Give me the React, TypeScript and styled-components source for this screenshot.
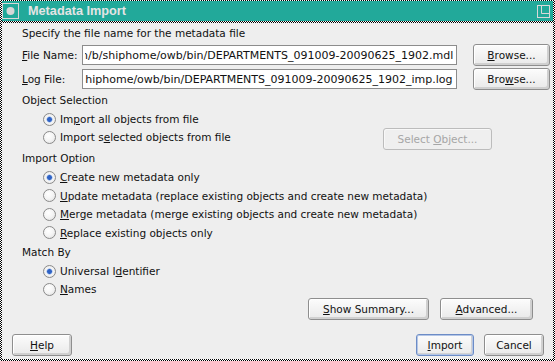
import { useLayoutEffect, useRef } from 'react';
import styled, { createGlobalStyle } from 'styled-components';

const GlobalStyle = createGlobalStyle`
  html, body {
    margin: 0;
    padding: 0;
  }
  body {
    font-family: "DejaVu Sans", "Open Sans", sans-serif;
    font-size: 10.5px;
    color: #111;
    background: #fff;
  }
`;

const Window = styled.div`
  box-sizing: border-box;
  width: 555px;
  height: 361px;
  padding: 1px 2px 2px 2px;
  display: flex;
  flex-direction: column;
  background: repeating-conic-gradient(#000 0% 25%, #fff 0% 50%) 0 0 / 2px 2px;
`;

const TitleBar = styled.div`
  height: 20px;
  margin-bottom: 2px;
  padding: 0 3px 0 0;
  display: flex;
  align-items: center;
  background: #22a99a;
`;

const TitleText = styled.span`
  margin-left: 9px;
  flex: 1;
  font-family: "Liberation Sans", Arial, sans-serif;
  font-weight: 700;
  font-size: 12.7px;
  color: #e4e4e4;
`;

const Body = styled.div`
  flex: 1;
  display: flex;
  flex-direction: column;
  padding: 3px 3px 3px 10px;
  background: #eeeeee;
`;

const Main = styled.div`
  display: flex;
  flex-direction: column;
  padding-left: 10px;
`;

const Text = styled.div<{ $top?: number }>`
  height: 14px;
  line-height: 14px;
  margin-top: ${({ $top }) => $top ?? 0}px;
  white-space: nowrap;
`;

const FileRows = styled.div`
  display: flex;
  flex-direction: column;
  gap: 2px;
  margin-top: 4px;
`;

const FileRow = styled.div`
  display: grid;
  grid-template-columns: 60px minmax(0, 1fr) 77px;
  align-items: center;
  height: 22px;
`;

const FieldLabel = styled.span`
  white-space: nowrap;
`;

const FieldInput = styled.input`
  box-sizing: border-box;
  min-width: 0;
  width: auto;
  height: 20px;
  margin: 0 16px 0 0;
  padding: 0 3px 0 2px;
  font-family: "DejaVu Sans", sans-serif;
  font-size: 11px;
  color: #111;
  border: 1px solid #8c8c8c;
  border-radius: 0;
  background: #fff;
  outline: none;
`;

const Key = styled.span`
  text-decoration: underline;
  text-underline-offset: 1px;
`;

const Button = styled.button<{ $w: number; $primary?: boolean }>`
  box-sizing: border-box;
  width: ${({ $w }) => $w}px;
  height: 22px;
  padding: 0;
  font-family: inherit;
  font-size: 10.5px;
  color: #111;
  border: 1px solid ${({ $primary }) => ($primary ? '#6c8cc6' : '#8e8e8e')};
  border-radius: 3px;
  background: linear-gradient(#fcfcfc, #e9e9e9);
  box-shadow: ${({ $primary }) =>
    $primary
      ? 'inset 0 0 0 1px #b4c6e6, inset -2px -2px 0 #d2d2d2'
      : 'inset 1px 1px 0 #fff, inset -2px -2px 0 #d0d0d0'};
  white-space: nowrap;
`;

const DisabledButton = styled(Button)`
  color: #a6a6a6;
  border-color: #bcbcbc;
  background: #efefef;
  box-shadow: inset 1px 1px 0 #f8f8f8;
`;

const RadioGroup = styled.div<{ $top?: number }>`
  display: flex;
  flex-direction: column;
  margin-top: ${({ $top }) => $top ?? 3}px;
  padding-left: 21px;
`;

const RadioRow = styled.label<{ $h?: number }>`
  height: ${({ $h }) => $h ?? 18}px;
  display: flex;
  align-items: center;
  gap: 4px;
  white-space: nowrap;
`;

const RadioDot = styled.span<{ $on?: boolean }>`
  box-sizing: border-box;
  width: 13px;
  height: 13px;
  border-radius: 50%;
  border: 1px solid #8a8a8a;
  background: ${({ $on }) =>
    $on
      ? 'radial-gradient(circle, #2f62c4 0 2px, #8fb0e6 2.6px, #f6f6f6 3.4px, #e4e4e4 100%)'
      : 'radial-gradient(circle at 40% 35%, #ffffff 0, #f4f4f4 50%, #dcdcdc 100%)'};
`;

const SelectionRow = styled.div`
  display: flex;
  align-items: flex-end;

  ${RadioGroup} {
    padding-bottom: 4px;
  }
`;

const SideButton = styled.div`
  margin-left: auto;
  margin-right: 58px;
`;

const SummaryRow = styled.div`
  display: flex;
  justify-content: flex-end;
  gap: 11px;
  padding-right: 17px;
`;

const Footer = styled.div`
  margin-top: auto;
  display: flex;
  align-items: center;
  padding-right: 6px;
`;

const FooterRight = styled.div`
  margin-left: auto;
  display: flex;
  gap: 10px;
`;

type RadioProps = {
  on?: boolean;
  h?: number;
  children: React.ReactNode;
};

const Radio = ({ on, h, children }: RadioProps) => (
  <RadioRow $h={h}>
    <RadioDot $on={on} />
    <span>{children}</span>
  </RadioRow>
);

// Text field scrolled to its end, as the dialog shows the tail of the path.
const PathField = ({ value }: { value: string }) => {
  const ref = useRef<HTMLInputElement>(null);

  useLayoutEffect(() => {
    const el = ref.current;
    if (el) el.scrollLeft = el.scrollWidth;
  }, [value]);

  return <FieldInput ref={ref} value={value} readOnly />;
};

const WindowIcon = () => (
  <svg width="17" height="16" viewBox="0 0 17 16">
    <rect x="0.5" y="0.5" width="16" height="15" fill="none" stroke="#d8d8d8" />
    <circle cx="8.5" cy="8" r="4" fill="#d6d6d6" />
  </svg>
);

const MaximizeIcon = () => (
  <svg width="13" height="13" viewBox="0 0 13 13">
    <rect x="0.5" y="0.5" width="12" height="12" fill="none" stroke="#d8d8d8" />
    <path d="M4.5 0.5 V8.5 H12.5" fill="none" stroke="#d8d8d8" />
  </svg>
);

const App = () => (
  <>
    <GlobalStyle />
    <Window>
      <TitleBar>
        <WindowIcon />
        <TitleText>Metadata Import</TitleText>
        <MaximizeIcon />
      </TitleBar>
      <Body>
        <Main>
          <Text>Specify the file name for the metadata file</Text>
          <FileRows>
            <FileRow>
              <FieldLabel>
                <Key>F</Key>ile Name:
              </FieldLabel>
              <PathField value="/scratch/b/shiphome/owb/bin/DEPARTMENTS_091009-20090625_1902.mdl" />
              <Button $w={77}>
                <Key>B</Key>rowse...
              </Button>
            </FileRow>
            <FileRow>
              <FieldLabel>
                <Key>L</Key>og File:
              </FieldLabel>
              <PathField value="/scratch/b/shiphome/owb/bin/DEPARTMENTS_091009-20090625_1902_imp.log" />
              <Button $w={77}>
                Bro<Key>w</Key>se...
              </Button>
            </FileRow>
          </FileRows>

          <Text $top={3}>Object Selection</Text>
          <SelectionRow>
            <RadioGroup>
              <Radio on>
                Im<Key>p</Key>ort all objects from file
              </Radio>
              <Radio>
                Import s<Key>e</Key>lected objects from file
              </Radio>
            </RadioGroup>
            <SideButton>
              <DisabledButton $w={109} disabled>
                Select <Key>O</Key>bject...
              </DisabledButton>
            </SideButton>
          </SelectionRow>

          <Text $top={1}>Import Option</Text>
          <RadioGroup>
            <Radio on h={18.5}>
              <Key>C</Key>reate new metadata only
            </Radio>
            <Radio h={18.5}>
              <Key>U</Key>pdate metadata (replace existing objects and create new metadata)
            </Radio>
            <Radio h={18.5}>
              <Key>M</Key>erge metadata (merge existing objects and create new metadata)
            </Radio>
            <Radio h={18.5}>
              <Key>R</Key>eplace existing objects only
            </Radio>
          </RadioGroup>

          <Text $top={3}>Match By</Text>
          <RadioGroup>
            <Radio on>
              Universal I<Key>d</Key>entifier
            </Radio>
            <Radio>
              <Key>N</Key>ames
            </Radio>
          </RadioGroup>

          <SummaryRow>
            <Button $w={121}>
              <Key>S</Key>how Summary...
            </Button>
            <Button $w={93}>
              <Key>A</Key>dvanced...
            </Button>
          </SummaryRow>
        </Main>

        <Footer>
          <Button $w={60}>
            <Key>H</Key>elp
          </Button>
          <FooterRight>
            <Button $w={58} $primary>
              <Key>I</Key>mport
            </Button>
            <Button $w={60}>Cancel</Button>
          </FooterRight>
        </Footer>
      </Body>
    </Window>
  </>
);

export default App;
